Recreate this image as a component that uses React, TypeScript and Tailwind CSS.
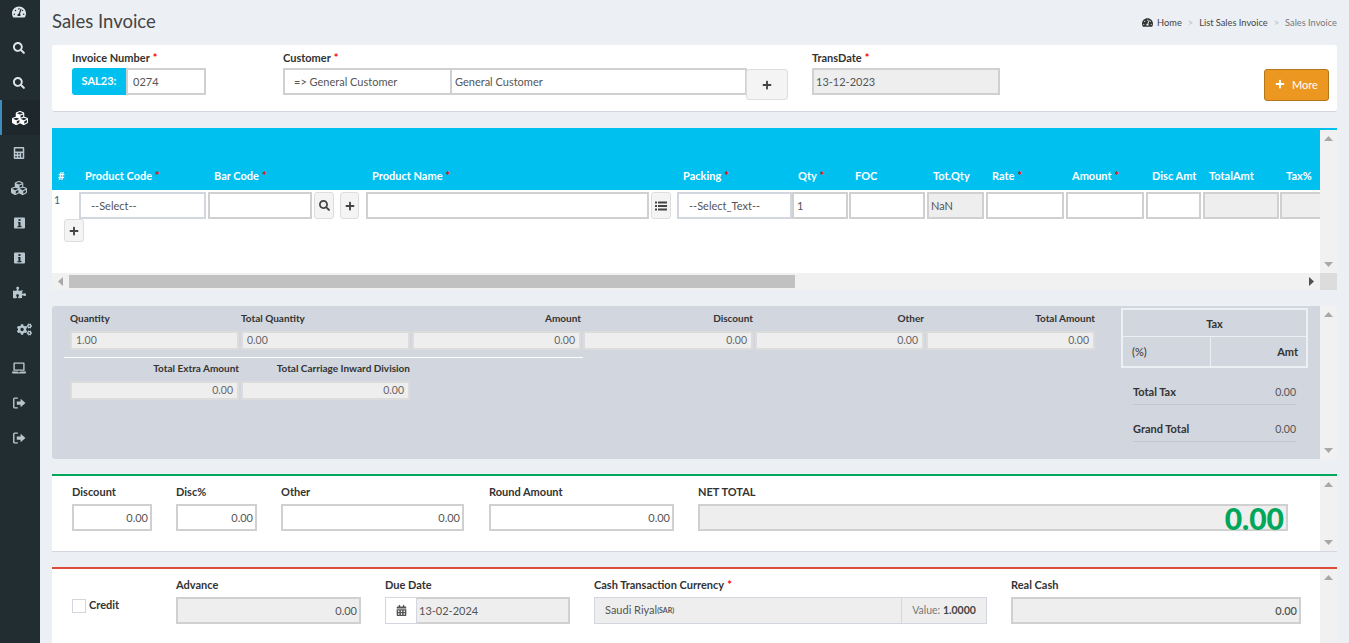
import type { ReactNode } from "react";
import {
  FaCalculator,
  FaCalendarAlt,
  FaCogs,
  FaCubes,
  FaLaptop,
  FaPlus,
  FaPuzzlePiece,
  FaSearch,
  FaTachometerAlt,
} from "react-icons/fa";

const tableCols = "grid grid-cols-[27px_129px_158px_311px_115px_57px_78px_59px_80px_80px_57px_77px_60px]";

function ListIcon() {
  return (
    <svg width="12" height="10" viewBox="0 0 12 10" fill="#444">
      <rect x="0" y="0.500" width="2" height="2" />
      <rect x="3" y="0.500" width="9" height="2" />
      <rect x="0" y="4" width="2" height="2" />
      <rect x="3" y="4" width="9" height="2" />
      <rect x="0" y="7.500" width="2" height="2" />
      <rect x="3" y="7.500" width="9" height="2" />
    </svg>
  );
}

function InfoBox() {
  return (
    <svg width="11" height="12" viewBox="0 0 11 12">
      <rect x="0" y="0.500" width="11" height="11" rx="1" fill="#b8c7ce" />
      <rect x="4.500" y="2" width="2" height="2" fill="#222d32" />
      <path d="M4 5h2.500v4h1v1.200h-4V9h1V6.200H4z" fill="#222d32" />
    </svg>
  );
}

function SignOut() {
  return (
    <svg width="13" height="12" viewBox="0 0 12 11" fill="none">
      <path d="M4.500 1H1.500a.8.800 0 0 0-.8.800v7.400a.8.800 0 0 0 .8.800h3" stroke="#b8c7ce" strokeWidth="1.300" />
      <path d="M3.500 4h3.500V1.500L11.500 5.500 7 9.500V7H3.500z" fill="#b8c7ce" />
    </svg>
  );
}

function Arrow({ dir }: { dir: "up" | "down" | "left" | "right" }) {
  if (dir === "up") return <svg width="9" height="5" viewBox="0 0 9 5"><path d="M4.500 0L9 5H0z" fill="#a8a8a8" /></svg>;
  if (dir === "down") return <svg width="9" height="5" viewBox="0 0 9 5"><path d="M0 0h9L4.500 5z" fill="#a8a8a8" /></svg>;
  if (dir === "left") return <svg width="5" height="9" viewBox="0 0 5 9"><path d="M5 0v9L0 4.500z" fill="#a8a8a8" /></svg>;
  return <svg width="5" height="9" viewBox="0 0 5 9"><path d="M0 0v9l5-4.500z" fill="#505050" /></svg>;
}

function ScrollV() {
  return (
    <div className="flex w-[17px] shrink-0 flex-col items-center justify-between self-stretch bg-[#f1f1f1] py-[6px]">
      <Arrow dir="up" />
      <Arrow dir="down" />
    </div>
  );
}

function Req() {
  return <span className="ml-[3px] text-[#f00]">*</span>;
}

function Label({ children, req, className = "" }: { children: ReactNode; req?: boolean; className?: string }) {
  return (
    <div className={`h-[16px] text-[11px] leading-[16px] font-bold whitespace-nowrap text-[#333] ${className}`}>
      {children}
      {req && <Req />}
    </div>
  );
}

function Box({ children, className = "" }: { children?: ReactNode; className?: string }) {
  return (
    <div className={`flex items-center truncate border-2 border-[#d0d0d0] pt-[1px] text-[11px] text-[#555] ${className}`}>
      {children}
    </div>
  );
}

function IconBtn({ children, className = "" }: { children: ReactNode; className?: string }) {
  return (
    <div className={`flex items-center justify-center rounded-[3px] border border-[#ddd] bg-[#f4f4f4] text-[#444] ${className}`}>
      {children}
    </div>
  );
}

function SummaryField({ label, value, left, className = "" }: { label: string; value?: string; left?: boolean; className?: string }) {
  return (
    <div className={`w-[169px] ${className}`}>
      <div className={`h-[21px] text-[10px] leading-[16px] font-bold whitespace-nowrap text-[#333] ${left ? "" : "text-right"}`}>{label}</div>
      <div className={`flex h-[19px] items-center border-2 border-[#dcdcdc] bg-[#eee] px-[4px] text-[10.500px] text-[#666] ${left ? "" : "justify-end"}`}>
        {value}
      </div>
    </div>
  );
}

const sideItems = [
  { icon: <FaTachometerAlt size={14} color="#dfe6ea" />, h: "h-[30px] pb-[6px]" },
  { icon: <FaSearch size={12} color="#dfe6ea" />, h: "h-[35px]" },
  { icon: <FaSearch size={12} color="#dfe6ea" />, h: "h-[35px]" },
  { icon: <FaCubes size={16} color="#fff" />, h: "h-[35px]", active: true },
  { icon: <FaCalculator size={12} color="#b8c7ce" />, h: "h-[35px]" },
  { icon: <FaCubes size={16} color="#b8c7ce" />, h: "h-[35px]" },
  { icon: <InfoBox />, h: "h-[35px]" },
  { icon: <InfoBox />, h: "h-[35px]" },
  { icon: <FaPuzzlePiece size={13} color="#b8c7ce" />, h: "h-[35px]" },
  { icon: <FaCogs size={15} color="#b8c7ce" />, h: "h-[38px] pl-[10px]" },
  { icon: <FaLaptop size={14} color="#b8c7ce" />, h: "h-[40px]" },
  { icon: <SignOut />, h: "h-[30px]" },
  { icon: <SignOut />, h: "h-[40px]" },
];

export default function App() {
  return (
    <div className="flex h-screen overflow-hidden bg-[#ecf0f5] font-['Lato',sans-serif] text-[11px] text-[#333]">
      {/* sidebar */}
      <aside className="w-[40px] shrink-0 bg-[#222d32]">
        {sideItems.map((it, i) => (
          <div
            key={i}
            className={`flex items-center justify-center pr-[2px] ${it.h} ${it.active ? "border-l-2 border-[#3c8dbc] bg-[#1e282c]" : ""}`}
          >
            {it.icon}
          </div>
        ))}
      </aside>

      <main className="min-w-0 flex-1 pr-[12px] pl-[12px]">
        {/* page title */}
        <div className="flex h-[45px] items-center justify-between">
          <h1 className="-translate-y-[1px] text-[18.500px] leading-none text-[#444]">Sales Invoice</h1>
          <div className="flex items-center text-[9.250px] text-[#444]">
            <FaTachometerAlt size={11} color="#333" className="mr-[4px]" />
            <span>Home</span>
            <span className="mx-[6px] text-[#bbb]">&gt;</span>
            <span>List Sales Invoice</span>
            <span className="mx-[6px] text-[#bbb]">&gt;</span>
            <span className="text-[#777]">Sales Invoice</span>
          </div>
        </div>

        {/* invoice head */}
        <section className="flex h-[67px] rounded-[3px] border-b border-[#d2d6de] bg-white pt-[5px] pl-[20px]">
          <div className="w-[211px]">
            <Label req>Invoice Number</Label>
            <div className="mt-[2px] flex h-[27px] w-[134px]">
              <div className="flex w-[54px] items-center justify-center rounded-l-[3px] bg-[#00c0ef] text-[11px] font-bold text-white">SAL23:</div>
              <Box className="flex-1 pl-[5px]">0274</Box>
            </div>
          </div>
          <div className="w-[529px]">
            <Label req>Customer</Label>
            <div className="mt-[2px] flex">
              <Box className="h-[27px] w-[169px] pl-[9px]">=&gt; General Customer</Box>
              <Box className="h-[27px] w-[295px] border-l-0 pl-[3px]">General Customer</Box>
              <IconBtn className="mt-[1px] -ml-[1px] h-[31px] w-[42px]"><FaPlus size={10} /></IconBtn>
            </div>
          </div>
          <div className="w-[452px]">
            <Label req>TransDate</Label>
            <Box className="mt-[2px] h-[27px] w-[188px] bg-[#eee] pl-[2px]">13-12-2023</Box>
          </div>
          <div className="mt-[19px] flex h-[32px] w-[65px] items-center justify-center rounded-[3px] border border-[#b3761c] bg-[#ec971f] text-[11px] text-white">
            <FaPlus size={10} className="mr-[7px] -translate-y-[1px]" />
            More
          </div>
        </section>

        {/* line items */}
        <section className="mt-[16px] h-[162px] border-t-2 border-[#00c0ef]">
          <div className="flex h-[143px] bg-white">
            <div className="min-w-0 flex-1 overflow-hidden">
              <div className={`${tableCols} h-[60px] w-[1338px] items-end bg-[#00c0ef] pb-[9px] text-[11px] leading-none font-bold whitespace-nowrap text-white`}>
                <div className="pl-[6px]">#</div>
                <div className="pl-[6px]">Product Code<Req /></div>
                <div className="pl-[6px]">Bar Code<Req /></div>
                <div className="pl-[6px]">Product Name<Req /></div>
                <div className="pl-[6px]">Packing<Req /></div>
                <div className="pl-[6px]">Qty<Req /></div>
                <div className="pl-[6px]">FOC</div>
                <div className="pl-[6px]">Tot.Qty</div>
                <div className="pl-[6px]">Rate<Req /></div>
                <div className="pl-[6px]">Amount<Req /></div>
                <div className="pl-[6px]">Disc Amt</div>
                <div className="pl-[6px]">TotalAmt</div>
                <div className="pl-[6px]">Tax%</div>
              </div>
              <div className={`${tableCols} mt-[2px] w-[1338px]`}>
                <div className="pl-[2px] text-[10.500px] leading-[16px] text-[#3c5a8c]">1</div>
                <Box className="mr-[2px] h-[27px] border-[#d2d6de] pl-[10px]">--Select--</Box>
                <div className="flex">
                  <Box className="h-[27px] w-[104px]" />
                  <IconBtn className="ml-[2px] h-[27px] w-[20px]"><FaSearch size={11} /></IconBtn>
                  <IconBtn className="ml-[6px] h-[27px] w-[19px]"><FaPlus size={10} /></IconBtn>
                </div>
                <div className="flex">
                  <Box className="h-[27px] w-[283px]" />
                  <IconBtn className="ml-[2px] h-[27px] w-[20px]"><ListIcon /></IconBtn>
                </div>
                <Box className="h-[27px] border-[#d2d6de] pl-[10px]">--Select_Text--</Box>
                <Box className="mr-[1px] h-[27px] pl-[3px]">1</Box>
                <Box className="mr-[2px] h-[27px]" />
                <Box className="mr-[2px] h-[27px] bg-[#eee] pl-[2px]">NaN</Box>
                <Box className="mr-[2px] h-[27px]" />
                <Box className="mr-[2px] h-[27px]" />
                <Box className="mr-[2px] h-[27px]" />
                <Box className="mr-[1px] h-[27px] bg-[#eee]" />
                <Box className="h-[27px] bg-[#eee]" />
              </div>
              <IconBtn className="ml-[12px] h-[23px] w-[20px]"><FaPlus size={10} /></IconBtn>
            </div>
            <ScrollV />
          </div>
          <div className="flex h-[17px] items-stretch">
            <div className="flex flex-1 items-center bg-[#f1f1f1]">
              <div className="flex w-[17px] justify-center"><Arrow dir="left" /></div>
              <div className="h-[13px] w-[726px] bg-[#c1c1c1]" />
              <div className="flex flex-1 items-center justify-end pr-[6px]"><Arrow dir="right" /></div>
            </div>
            <div className="w-[17px] bg-[#dcdcdc]" />
          </div>
        </section>

        {/* totals */}
        <section className="mt-[16px] flex h-[153px] rounded-l-[3px] bg-[#d2d6de]">
          <div className="w-[1069px] shrink-0 pt-[4px] pl-[18px]">
            <div className="flex gap-[2px]">
              <SummaryField label="Quantity" value="1.00" left />
              <SummaryField label="Total Quantity" value="0.00" left />
              <SummaryField label="Amount" value="0.00" />
              <SummaryField label="Discount" value="0.00" className="w-[170px]" />
              <SummaryField label="Other" value="0.00" />
              <SummaryField label="Total Amount" value="0.00" />
            </div>
            <div className="mt-[7px] -ml-[6px] h-px w-[519px] bg-white" />
            <div className="mt-[2px] flex gap-[2px]">
              <SummaryField label="Total Extra Amount" value="0.00" />
              <SummaryField label="Total Carriage Inward Division" value="0.00" />
            </div>
          </div>
          <div className="w-[199px] shrink-0 pt-[2px]">
            <div className="w-[187px] border-2 border-[#ecf0f5] text-[11px]">
              <div className="h-[27px] border-b border-[#ecf0f5] text-center leading-[28px] font-bold">Tax</div>
              <div className="flex h-[29px] leading-[30px]">
                <div className="w-[88px] border-r border-[#ecf0f5] pl-[9px]">(%)</div>
                <div className="flex-1 pr-[8px] text-right font-bold">Amt</div>
              </div>
            </div>
            <div className="mt-[16px] ml-[12px] flex h-[21px] w-[163px] justify-between border-b border-[#c3c7cf] text-[11px] leading-[16px]">
              <span className="font-bold">Total Tax</span>
              <span className="text-[10.500px] text-[#555]">0.00</span>
            </div>
            <div className="mt-[16px] ml-[12px] flex h-[21px] w-[163px] justify-between border-b border-[#c3c7cf] text-[11px] leading-[16px]">
              <span className="font-bold">Grand Total</span>
              <span className="text-[10.500px] text-[#555]">0.00</span>
            </div>
          </div>
          <ScrollV />
        </section>

        {/* net total */}
        <section className="mt-[15px] flex h-[78px] border-t-2 border-b border-t-[#00a65a] border-b-[#d2d6de] bg-white">
          <div className="flex flex-1 pt-[8px] pl-[20px]">
            <div className="mr-[24px] w-[80px]">
              <Label>Discount</Label>
              <Box className="mt-[4px] h-[27px] justify-end pr-[2px] text-[10.500px]">0.00</Box>
            </div>
            <div className="mr-[24px] w-[81px]">
              <Label>Disc%</Label>
              <Box className="mt-[4px] h-[27px] justify-end pr-[2px] text-[10.500px]">0.00</Box>
            </div>
            <div className="mr-[25px] w-[183px]">
              <Label>Other</Label>
              <Box className="mt-[4px] h-[27px] justify-end pr-[2px] text-[10.500px]">0.00</Box>
            </div>
            <div className="mr-[24px] w-[185px]">
              <Label>Round Amount</Label>
              <Box className="mt-[4px] h-[27px] justify-end pr-[2px] text-[10.500px]">0.00</Box>
            </div>
            <div className="w-[590px]">
              <Label>NET TOTAL</Label>
              <div className="mt-[4px] flex h-[27px] items-center justify-end border-2 border-[#d0d0d0] bg-[#eee] pr-[2px] text-[30px] leading-none font-black text-[#00a65a]">
                0.00
              </div>
            </div>
          </div>
          <ScrollV />
        </section>

        {/* payment */}
        <section className="mt-[15px] flex h-[90px] border-t-2 border-[#dd4b39] bg-white">
          <div className="flex flex-1 pt-[8px] pl-[20px]">
            <div className="mt-[22px] flex h-[14px] w-[104px] items-center">
              <div className="h-[14px] w-[14px] border border-[#d2d6de]" />
              <span className="ml-[3px] -translate-y-[1px] font-bold text-[#333]">Credit</span>
            </div>
            <div className="mr-[24px] w-[185px]">
              <Label>Advance</Label>
              <Box className="mt-[4px] h-[27px] justify-end bg-[#eee] pr-[2px] text-[10.500px]">0.00</Box>
            </div>
            <div className="mr-[24px] w-[185px]">
              <Label>Due Date</Label>
              <div className="mt-[4px] flex h-[27px]">
                <div className="flex w-[32px] items-center justify-center border border-[#d2d6de] text-[#555]"><FaCalendarAlt size={11} /></div>
                <Box className="flex-1 border-l-0 bg-[#eee] pl-[2px] text-[10.500px]">13-02-2024</Box>
              </div>
            </div>
            <div className="mr-[24px] w-[393px]">
              <Label req>Cash Transaction Currency</Label>
              <div className="mt-[4px] flex h-[27px] border border-[#d2d6de] bg-[#eee] text-[#555]">
                <div className="flex flex-1 items-center pl-[10px] text-[11px]">
                  Saudi Riyal<span className="text-[7px] font-bold">(SAR)</span>
                </div>
                <div className="flex w-[85px] items-center justify-center border-l border-[#d2d6de] text-[10.500px] text-[#777]">
                  Value:&nbsp;<b className="text-[#444]">1.0000</b>
                </div>
              </div>
            </div>
            <div className="w-[290px]">
              <Label>Real Cash</Label>
              <Box className="mt-[4px] h-[27px] justify-end bg-[#eee] pr-[2px] text-[10.500px] font-semibold">0.00</Box>
            </div>
          </div>
          <ScrollV />
        </section>
      </main>
    </div>
  );
}
